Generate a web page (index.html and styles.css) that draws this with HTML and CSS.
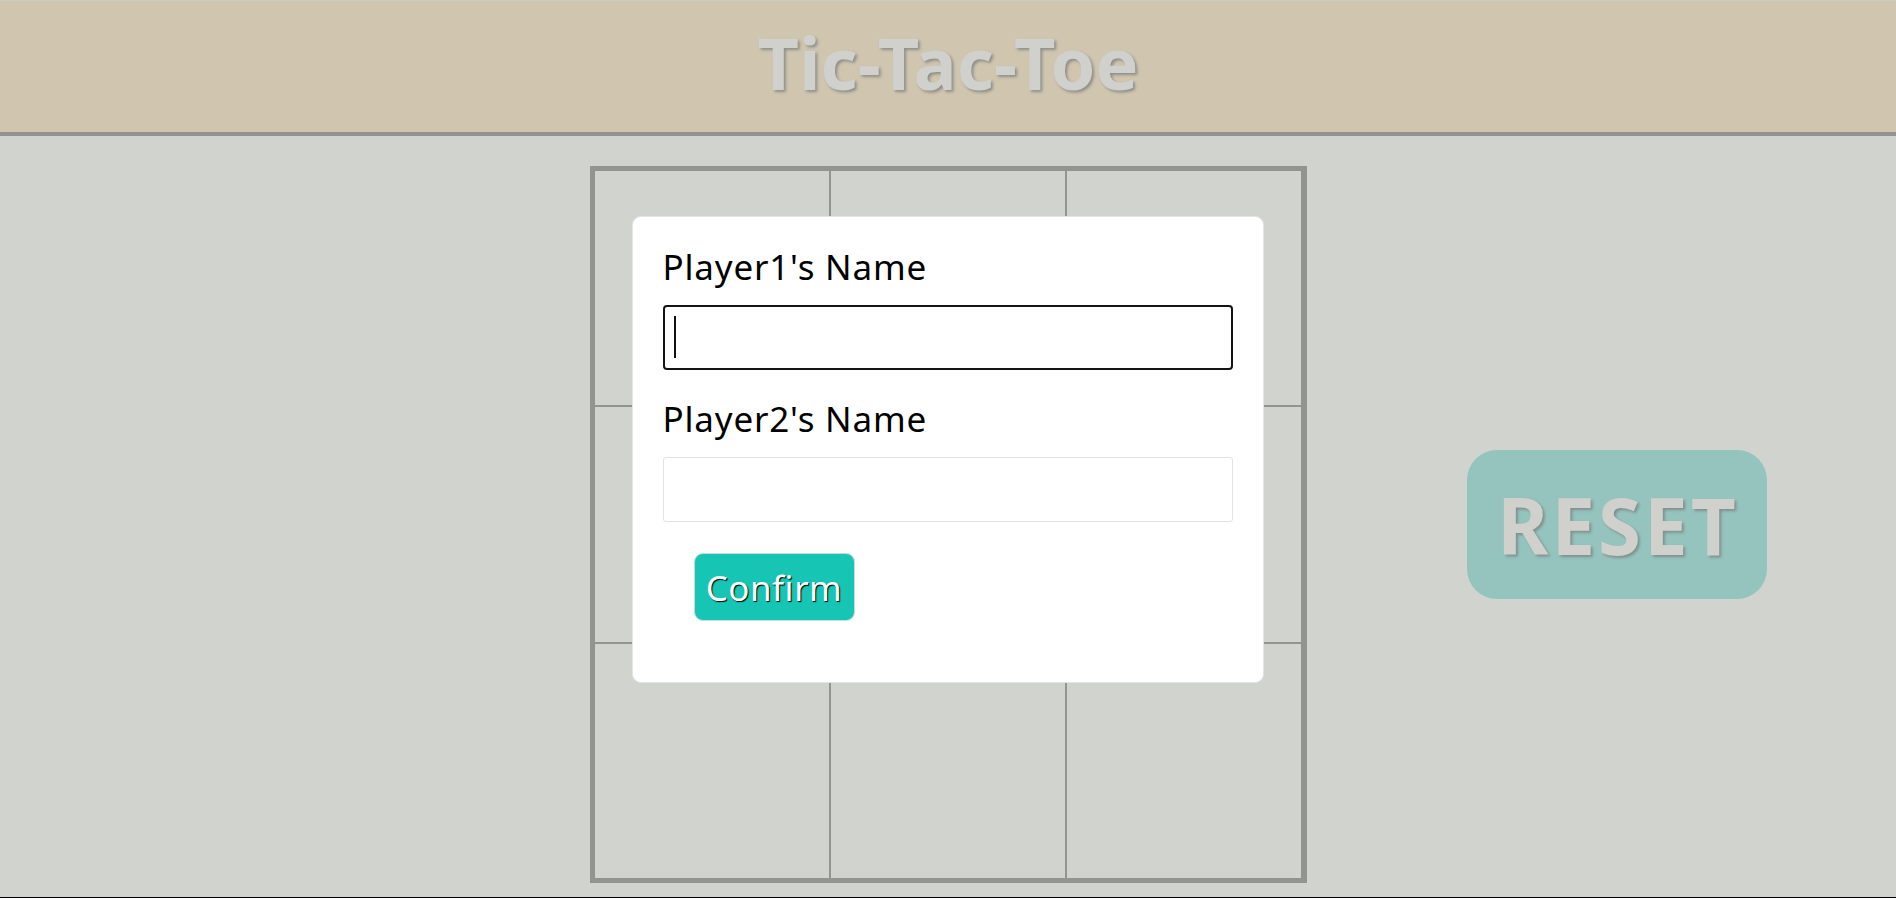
FILE: index.html
```html
<!DOCTYPE html>
<html lang="en">
<head>
    <meta charset="UTF-8">
    <meta name="viewport" content="width=device-width, initial-scale=1.0">
    <title>Tic-Tac-Toe</title>
    <link rel="stylesheet" href="styles.css">
</head>
<body>
    <header class="top">
        <h1 class="title">Tic-Tac-Toe</h1>
    </header>

    <main class="game">
        <div class="board-wrap">
            <div class="board">
                <div class="cell"></div>
                <div class="cell"></div>
                <div class="cell"></div>
                <div class="cell"></div>
                <div class="cell"></div>
                <div class="cell"></div>
                <div class="cell"></div>
                <div class="cell"></div>
                <div class="cell"></div>
            </div>

            <form class="names" onsubmit="return false">
                <label for="player1">Player1's Name</label>
                <div class="field">
                    <input type="text" id="player1" class="name-input active" autofocus>
                    <span class="caret"></span>
                </div>
                <label for="player2">Player2's Name</label>
                <div class="field last">
                    <input type="text" id="player2" class="name-input">
                </div>
                <button type="submit" class="confirm">Confirm</button>
            </form>
        </div>

        <button class="reset">RESET</button>
    </main>
</body>
</html>
```

FILE: styles.css
```css
html, body {
    margin: 0;
    padding: 0;
}
body {
    background-color: #d1d3cf;
    font-family: "Noto Sans", Arial, sans-serif;
    min-height: 897px;
    border-bottom: 1px solid #000;
}
.top {
    background-color: #d0c5af;
    height: 136px;
    box-sizing: border-box;
    border-bottom: 4px solid #939490;
    border-top: 1px solid #c9cbc6;
}
.title {
    margin: 0;
    text-align: center;
    font-size: 72px;
    font-weight: 700;
    line-height: 122px;
    color: #d0d1cc;
    text-shadow: 2px 2px 3px #8e8e8a;
}
.game {
    display: grid;
    grid-template-columns: 1fr 717px 1fr;
    margin-top: 30px;
}
.board-wrap {
    grid-column: 2;
    position: relative;
}
.board {
    display: grid;
    grid-template-columns: repeat(3, 1fr);
    grid-template-rows: repeat(3, 1fr);
    gap: 2px;
    width: 717px;
    height: 717px;
    box-sizing: border-box;
    border: 5px solid #939490;
    background-color: #939490;
}
.cell {
    background-color: #d1d3cf;
}
.names {
    position: absolute;
    top: 50px;
    left: 42px;
    width: 632px;
    box-sizing: border-box;
    background-color: #ffffff;
    border: 1px solid #e4e5e3;
    border-radius: 9px;
    padding: 29px 30px 61px 30px;
}
.names label {
    display: block;
    font-size: 35px;
    line-height: 42px;
    letter-spacing: 0.8px;
    color: #000;
    margin-bottom: 17px;
}
.field {
    position: relative;
    margin-bottom: 28px;
}
.field.last {
    margin-bottom: 31px;
}
.name-input {
    display: block;
    width: 100%;
    height: 65px;
    box-sizing: border-box;
    margin: 0;
    padding: 0 10px;
    border: 1px solid #e3e3e3;
    border-radius: 3px;
    font-family: "Noto Sans", Arial, sans-serif;
    font-size: 32px;
    outline: none;
    caret-color: transparent;
}
.name-input.active,
.name-input:focus {
    border: 2px solid #141414;
    border-radius: 4px;
}
.caret {
    position: absolute;
    left: 11px;
    top: 11px;
    width: 2px;
    height: 42px;
    background-color: #111;
}
.confirm {
    display: block;
    margin-left: 31px;
    width: 161px;
    height: 68px;
    padding: 0;
    background-color: #17c5b4;
    border: 1px solid #c6dcd9;
    border-radius: 9px;
    color: #ffffff;
    font-family: "Noto Sans", Arial, sans-serif;
    font-size: 35px;
    letter-spacing: 0.5px;
    text-shadow: 1px 1px 1px #000;
    cursor: pointer;
}
.reset {
    grid-column: 3;
    align-self: center;
    justify-self: start;
    margin-left: 160px;
    width: 300px;
    height: 149px;
    padding: 0 0 0 3px;
    border: none;
    border-radius: 30px;
    background-color: #95c4bf;
    color: #d0d1cc;
    font-family: "Noto Sans", Arial, sans-serif;
    font-size: 78px;
    font-weight: 700;
    letter-spacing: 3px;
    text-shadow: 2px 2px 3px #7f8f8c;
    cursor: pointer;
}
```
